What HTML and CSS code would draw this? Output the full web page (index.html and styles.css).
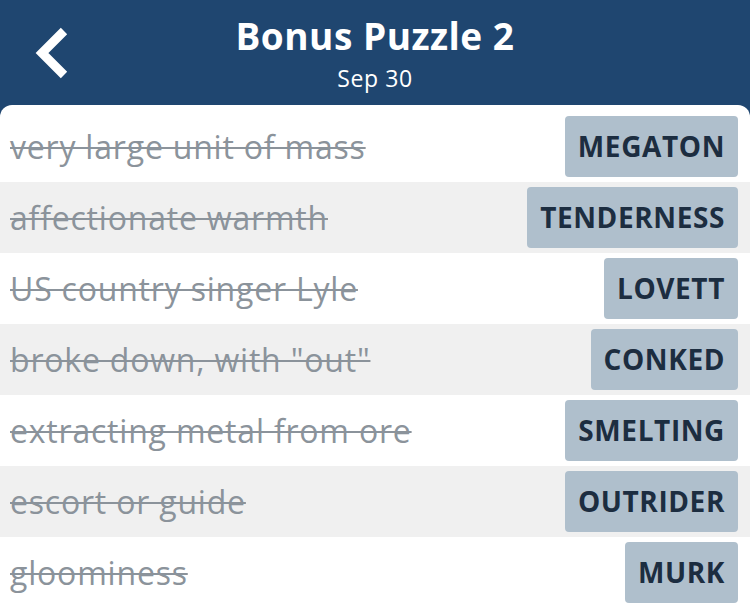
FILE: index.html
```html
<!DOCTYPE html>
<html lang="en">
<head>
    <meta charset="UTF-8">
    <meta name="viewport" content="width=device-width, initial-scale=1.0">
    <title>Bonus Puzzle 2</title>
    <link rel="stylesheet" href="styles.css">
</head>
<body>

    <div class="header">
        <a class="back" href="#">
            <svg width="36" height="52" viewBox="0 0 36 52">
                <polyline points="30,4 8,26 30,48" fill="none" stroke="#fff" stroke-width="9"/>
            </svg>
        </a>
        <div class="title">Bonus Puzzle 2</div>
        <div class="subtitle">Sep 30</div>
    </div>

    <div class="list">
        <div class="row">
            <span class="clue">very large unit of mass</span>
            <span class="answer">MEGATON</span>
        </div>
        <div class="row alt">
            <span class="clue">affectionate warmth</span>
            <span class="answer">TENDERNESS</span>
        </div>
        <div class="row">
            <span class="clue">US country singer Lyle</span>
            <span class="answer">LOVETT</span>
        </div>
        <div class="row alt">
            <span class="clue">broke down, with "out"</span>
            <span class="answer">CONKED</span>
        </div>
        <div class="row">
            <span class="clue">extracting metal from ore</span>
            <span class="answer">SMELTING</span>
        </div>
        <div class="row alt">
            <span class="clue">escort or guide</span>
            <span class="answer">OUTRIDER</span>
        </div>
        <div class="row">
            <span class="clue">gloominess</span>
            <span class="answer">MURK</span>
        </div>
    </div>

</body>
</html>
```

FILE: styles.css
```css
body {
    margin: 0;
    font-family: "Open Sans", sans-serif;
    background-color: #1f4670;
    overflow: hidden;
}
.header {
    position: relative;
    height: 105px;
    color: white;
    text-align: center;
}
.back {
    position: absolute;
    left: 34px;
    top: 27px;
}
.title {
    padding-top: 12px;
    font-size: 37px;
    font-weight: bold;
    letter-spacing: 0.5px;
    line-height: 48px;
}
.subtitle {
    font-size: 23px;
    letter-spacing: 0.6px;
    line-height: 36px;
}
.list {
    background: white;
    border-radius: 12px 12px 0 0;
    padding-top: 6px;
    height: 503px;
}
.row {
    display: flex;
    justify-content: space-between;
    align-items: center;
    height: 71px;
    padding: 0 12px 0 10px;
}
.row.alt {
    background: #f0f0f0;
}
.clue {
    font-size: 32px;
    letter-spacing: 0.8px;
    color: #8b939b;
    text-decoration: line-through;
    text-decoration-thickness: 2px;
}
.answer {
    background: #afbfcc;
    color: #1c2d40;
    font-size: 28px;
    font-weight: bold;
    letter-spacing: 0.6px;
    line-height: 61px;
    padding: 0 13px;
    border-radius: 4px;
}
```
